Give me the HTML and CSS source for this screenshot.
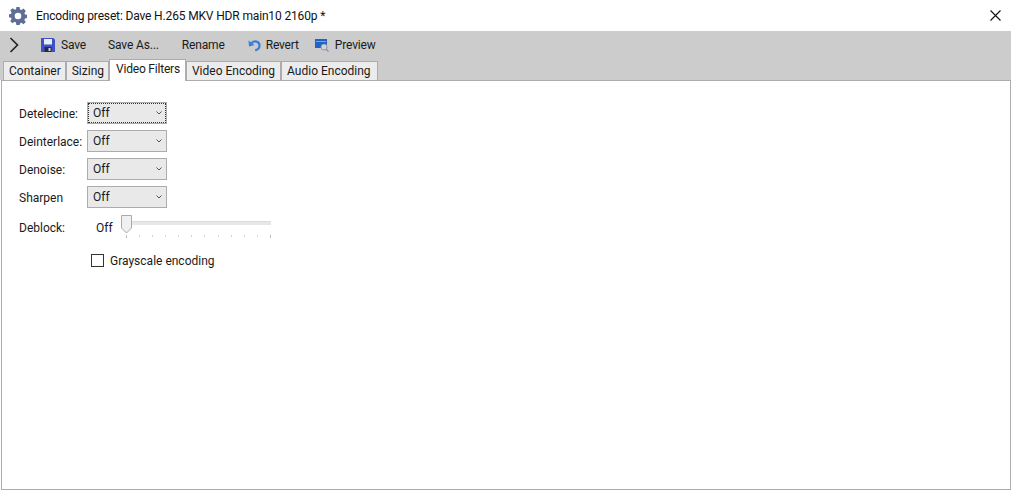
FILE: index.html
```html
<!DOCTYPE html>
<html lang="en">
<head>
  <meta charset="UTF-8">
  <title>Encoding preset</title>
  <link rel="stylesheet" href="styles.css">
</head>
<body>
  <!-- Title bar -->
  <div class="titlebar">
    <svg class="app-icon" width="18" height="18" viewBox="0 0 18 18">
      <path fill="#5f6f94" fill-rule="evenodd" d="M7.4 0h3.200l.4 2.400 1.500.6 2-1.400 2.300 2.300-1.400 2 .6 1.500 2.400.4v3.200l-2.400.4-.6 1.500 1.400 2-2.300 2.300-2-1.400-1.500.6-.4 2.400H7.400L7 15.400l-1.500-.6-2 1.400-2.300-2.300 1.400-2-.6-1.500L-.4 10.600V7.400l2.400-.4.6-1.500-1.400-2 2.300-2.300 2 1.400L7 2.400zM9 5.700a3.300 3.300 0 1 0 0 6.600 3.300 3.300 0 0 0 0-6.600z"/>
    </svg>
    <span class="title">Encoding preset: Dave H.265 MKV HDR main10 2160p *</span>
    <svg class="close" width="11" height="11" viewBox="0 0 11 11">
      <path d="M.5.5l10 10M10.500.5l-10 10" stroke="#111" stroke-width="1.100" fill="none"/>
    </svg>
  </div>

  <div class="chrome">
    <!-- Toolbar -->
    <div class="toolbar">
      <svg class="chevron" width="10" height="16" viewBox="0 0 10 16">
        <path d="M1.500 1l7 7-7 7" stroke="#222" stroke-width="1.600" fill="none"/>
      </svg>
      <div class="tool tool-save">
        <svg width="14" height="14" viewBox="0 0 14 14">
          <path fill="#3f51c4" d="M0 0h12.500L14 1.500V14H0z"/>
          <path fill="#e8ecf6" d="M3 1h8v5.500H3z"/>
          <path fill="#20284e" d="M3.500 9h7v5h-7z"/>
          <path fill="#d5d8e2" d="M7.500 10h2v3h-2z"/>
        </svg>
        <span>Save</span>
      </div>
      <div class="tool tool-saveas"><span>Save As...</span></div>
      <div class="tool tool-rename"><span>Rename</span></div>
      <div class="tool tool-revert">
        <svg width="13" height="13" viewBox="0 0 13 13">
          <path d="M3.500 4.200C6 1.400 11.500 2 11.500 6.400c0 2.600-2 4.300-4.300 5" stroke="#3a7fd6" stroke-width="2.200" fill="none"/>
          <path fill="#3a7fd6" d="M.5 1.500l.5 6 5.500-1.500z"/>
        </svg>
        <span>Revert</span>
      </div>
      <div class="tool tool-preview">
        <svg width="14" height="14" viewBox="0 0 14 14">
          <path fill="#1f63c4" d="M0 1h12v9H0z"/>
          <path fill="#7da6dc" d="M1 3h10v1H1z"/>
          <circle cx="9" cy="9" r="3" fill="#cfd6de" stroke="#8b96a3"/>
          <path d="M11 11l2.500 2.500" stroke="#8b96a3" stroke-width="1.200"/>
        </svg>
        <span>Preview</span>
      </div>
    </div>

    <!-- Tabs -->
    <div class="tabs">
      <div class="tab">Container</div>
      <div class="tab">Sizing</div>
      <div class="tab active">Video Filters</div>
      <div class="tab tab-encoding">Video Encoding</div>
      <div class="tab tab-audio">Audio Encoding</div>
    </div>
  </div>

  <!-- Panel -->
  <div class="panel">
    <div class="form">
      <label>Detelecine:</label>
      <div class="combo focused"><span>Off</span><svg width="6" height="4" viewBox="0 0 6 4"><path d="M.5.5L3 3 5.500.5" stroke="#555" fill="none"/></svg></div>
      <label>Deinterlace:</label>
      <div class="combo"><span>Off</span><svg width="6" height="4" viewBox="0 0 6 4"><path d="M.5.5L3 3 5.500.5" stroke="#555" fill="none"/></svg></div>
      <label>Denoise:</label>
      <div class="combo"><span>Off</span><svg width="6" height="4" viewBox="0 0 6 4"><path d="M.5.5L3 3 5.500.5" stroke="#555" fill="none"/></svg></div>
      <label>Sharpen</label>
      <div class="combo"><span>Off</span><svg width="6" height="4" viewBox="0 0 6 4"><path d="M.5.5L3 3 5.500.5" stroke="#555" fill="none"/></svg></div>
      <label class="deblock-label">Deblock:</label>
      <div class="deblock">
        <span class="deblock-value">Off</span>
        <div class="slider">
          <div class="track"></div>
          <svg class="thumb" width="11" height="19" viewBox="0 0 11 19">
            <path d="M.5.500h10v12.500l-5 5-5-5z" fill="#f0f0f0" stroke="#ababab"/>
          </svg>
          <div class="ticks">
            <i></i><i></i><i></i><i></i><i></i><i></i><i></i><i></i><i></i><i></i><i></i><i></i>
          </div>
        </div>
      </div>
      <div class="check-row">
        <span class="checkbox"></span>
        <span>Grayscale encoding</span>
      </div>
    </div>
  </div>
</body>
</html>
```

FILE: styles.css
```css
/* General Styles */
html, body {
  height: 100%;
}
body {
  margin: 0;
  background: #fff;
  color: #1a1a1a;
  font-family: Roboto, sans-serif;
  font-size: 12px;
  display: flex;
  flex-direction: column;
  overflow: hidden;
}

/* Title bar */
.titlebar {
  height: 31px;
  display: flex;
  align-items: center;
  padding: 0 11px 0 9px;
  flex-shrink: 0;
}
.app-icon {
  margin-right: 9px;
}
.title {
  flex: 1;
  color: #111;
  letter-spacing: -0.15px;
}

/* Toolbar */
.chrome {
  background: #ccc;
  margin-right: 1px;
  flex-shrink: 0;
}
.toolbar {
  height: 29px;
  box-sizing: border-box;
  display: flex;
  align-items: center;
  padding: 0 0 1px 9px;
}
.tool {
  display: flex;
  align-items: center;
  gap: 6px;
  letter-spacing: -0.15px;
}
.tool-save { margin-left: 22px; }
.tool-saveas { margin-left: 22px; }
.tool-rename { margin-left: 23px; }
.tool-revert { margin-left: 23px; gap: 5px; }
.tool-preview { margin-left: 16px; }

/* Tabs */
.tabs {
  height: 20px;
  display: flex;
  align-items: flex-end;
  padding-left: 3px;
}
.tab {
  height: 19px;
  line-height: 18px;
  padding: 0 4px 0 5px;
  box-sizing: border-box;
  background: #ececec;
  border: 1px solid #acacac;
  border-bottom: none;
}
.tab-encoding {
  padding: 0 5px;
}
.tab-audio {
  padding: 0 6px 0 5px;
}
.tab.active {
  background: #fff;
  height: 22px;
  margin-bottom: -1px;
  padding: 0 5px 0 6px;
  letter-spacing: -0.2px;
  position: relative;
  z-index: 1;
}

/* Panel */
.panel {
  flex: 1;
  margin: 0 1px 1px 1px;
  border: 1px solid #acacac;
  padding: 21px 0 0 17px;
}
.form {
  display: grid;
  grid-template-columns: 68px 80px;
  grid-auto-rows: 22px;
  row-gap: 6px;
  align-items: center;
}
.form label {
  padding-top: 2px;
}
.combo {
  height: 22px;
  box-sizing: border-box;
  border: 1px solid #acacac;
  background: #e9e9e9;
  display: flex;
  align-items: center;
  justify-content: space-between;
  padding: 0 4px 0 5px;
}
.combo.focused {
  outline: 1px dotted #333;
  outline-offset: -2px;
}
.form .deblock-label {
  align-self: start;
  padding-top: 7px;
}
.deblock {
  align-self: start;
  margin-top: 1px;
  display: flex;
  align-items: flex-start;
  width: 184px;
}
.deblock-value {
  margin: 6px 0 0 9px;
  width: 25px;
}
.slider {
  position: relative;
  width: 151px;
  height: 24px;
}
.track {
  position: absolute;
  top: 6px;
  left: 0;
  right: 0;
  height: 4px;
  background: #e7e7e7;
  border-top: 1px solid #dcdcdc;
  box-sizing: border-box;
}
.thumb {
  position: absolute;
  top: 0;
  left: 0;
}
.ticks {
  position: absolute;
  top: 20px;
  left: 5px;
  right: 0;
  display: flex;
  justify-content: space-between;
}
.ticks i {
  width: 1px;
  height: 2px;
  background: #d4d4d4;
}
.ticks i:first-child,
.ticks i:last-child {
  height: 3px;
  background: #bcbcbc;
}
.check-row {
  grid-column: 2;
  display: flex;
  align-items: center;
  gap: 6px;
  margin-left: 4px;
  margin-top: 15px;
  white-space: nowrap;
}
.checkbox {
  width: 13px;
  height: 13px;
  flex-shrink: 0;
  box-sizing: border-box;
  border: 1px solid #333;
  background: #fff;
}
```
